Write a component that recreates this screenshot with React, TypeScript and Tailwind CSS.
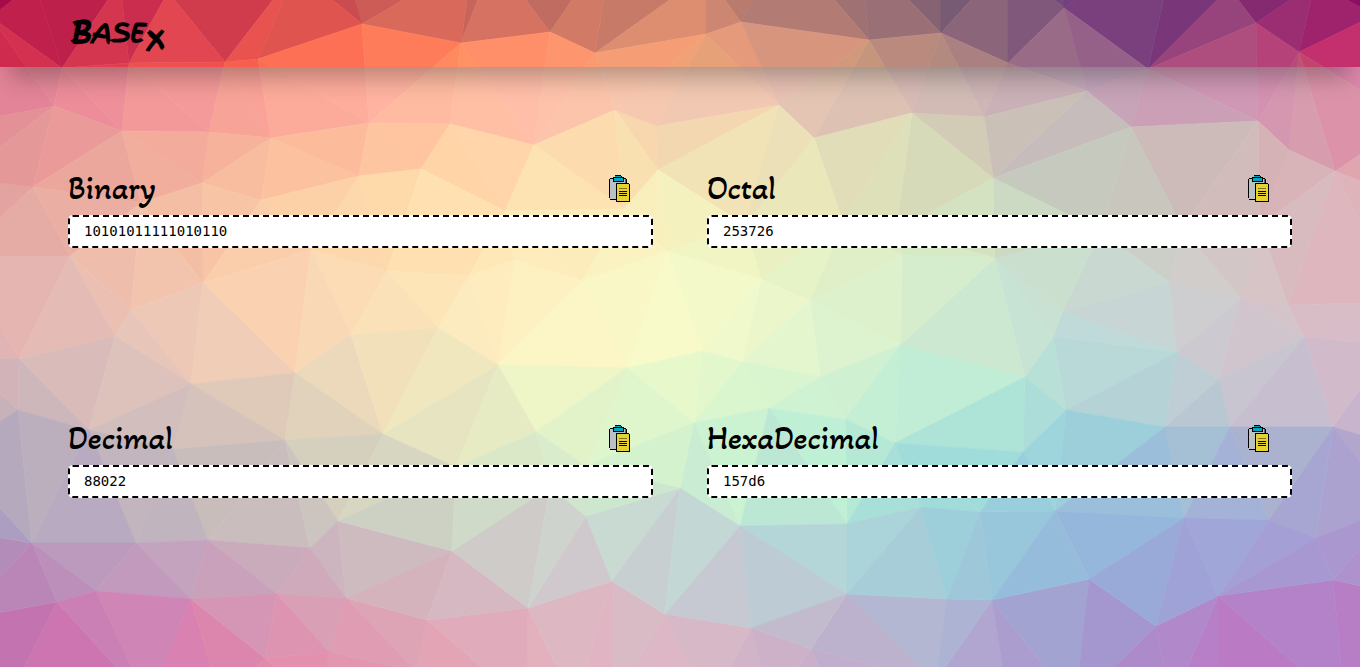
import { useId, useState } from "react";

type Point = [number, number];
type Rgb = [number, number, number];

const VERTICES: Point[] = [
  [-80, -90], [1440, -90], [-90, 740], [1450, 740],
  [35, -17], [120, -18], [168, -8], [296, -30], [346, -30], [473, -41], [494, -42], [614, -61], [706, -26], [787, -56],
  [860, -50], [941, -53], [1008, -41], [1064, -40], [1180, -75], [1229, -12], [1315, -17], [1375, 15],
  [-9, 17], [-57, 127], [-40, 178], [-40, 256], [-40, 358], [-50, 453], [-35, 532], [-40, 620],
  [1409, 120], [1433, 210], [1400, 302], [1390, 346], [1400, 447], [1395, 507], [1400, 595],
  [5, 705], [148, 702], [222, 705], [320, 710], [416, 671], [526, 705], [575, 705], [612, 705], [710, 705], [770, 705],
  [835, 705], [935, 682], [1010, 715], [1075, 705], [1172, 705], [1218, 720], [1345, 708],
  [62, 68], [54, 106], [129, 63], [122, 131], [225, 62], [258, 59], [362, 24], [209, 132], [271, 138], [33, 187],
  [202, 183], [261, 200], [141, 203], [70, 256], [461, 43], [550, 32], [595, 53], [369, 123], [450, 124], [534, 145],
  [615, 110], [657, 126], [421, 169], [359, 176], [505, 211], [658, 170], [624, 209], [706, 34], [741, 22],
  [869, 40], [941, 33], [1008, 63], [1064, 8], [1148, 69], [1256, 23], [1299, 52], [1335, 171], [1289, 150],
  [1258, 121], [1087, 91], [1131, 127], [984, 117], [993, 178], [912, 113], [779, 105], [814, 138],
  [1170, 282], [1062, 312], [1053, 337], [1177, 352], [1241, 298], [1288, 305], [1304, 337], [1219, 379],
  [1025, 377], [1066, 410], [1165, 427], [1230, 427], [1333, 427], [995, 258], [902, 255], [761, 279], [810, 301],
  [900, 345], [1101, 231], [1182, 228], [1260, 225], [745, 225], [843, 222], [896, 231], [667, 251], [582, 281],
  [514, 260], [469, 276], [387, 271], [311, 250], [203, 283], [131, 310], [115, 336], [19, 359], [191, 384],
  [295, 373], [351, 335], [438, 328], [498, 365], [627, 368], [703, 351], [742, 362], [820, 377], [769, 408],
  [694, 423], [845, 419], [895, 443], [383, 434], [285, 440], [18, 410], [89, 430], [536, 432], [173, 449],
  [32, 543], [136, 543], [208, 540], [310, 548], [338, 521], [57, 602], [96, 591], [191, 599], [277, 594],
  [346, 598], [265, 658], [427, 620], [452, 551], [528, 608], [612, 581], [586, 516], [665, 614], [740, 526],
  [680, 488], [329, 652], [847, 524], [847, 594], [751, 628], [811, 649], [921, 507], [980, 512], [1055, 511],
  [1184, 518], [1269, 520], [1316, 538], [947, 599], [992, 600], [1089, 579], [1156, 626], [1218, 596],
  [1333, 580], [456, 467], [550, 487], [586, 466], [1023, 452],
];

const VEIL = 0.42;
const COLUMN_STEP = 136;

/* Rows marked as veiled hold the colour as seen through the white veil of the content area. */
const PALETTE: { y: number; veiled: boolean; colors: string }[] = [
  { y: 15, veiled: false, colors: "B5164A CB2E4E DC4A4C E06A5A D87A65 D98C70 B88078 8C6B78 7E4E82 8F3C7A A01A68" },
  { y: 50, veiled: false, colors: "CE2A4E E04352 FF6652 FF7A5C FF946E F29F78 D39280 AE8380 93628A AE4E7F C42C70" },
  { y: 100, veiled: true, colors: "E38498 F2939A FBA497 FFBBA1 FFC0A9 F4CBB0 E4C5B2 D2BCB5 C4A8B8 CF98B5 DC8BA8" },
  { y: 150, veiled: true, colors: "E39597 F0A89B FAB79A FFC6A0 FFD9AB F6DDB0 E7E0B8 D3D2B6 C4C4BD CFB6B8 E0A0AC" },
  { y: 200, veiled: true, colors: "E2A29E EFB09E FBCBA4 FFDBAA FFE5B4 F6F0BC E8E6BA D4DFBB C5CCC0 D1BEBC DDB2B8" },
  { y: 270, veiled: true, colors: "E5B2AF F2C3AE FCD3B0 FFE2B4 FFF0C0 F6F9C6 E4F3C8 D5EDCC C8DBD0 D2CACA E0B4BC" },
  { y: 330, veiled: true, colors: "DFB4B4 E9C5B9 F9D2B5 F8E4BA FFF4C4 F8FBCA E4F6CE CFEACF BFDCDA D0C8CE D8BCC8" },
  { y: 390, veiled: true, colors: "CDB3B9 DCC2BC E3CCB8 EFE2BC EEF4C6 E4F8CA D2F3D2 BFECD6 B0DAD8 C4C8D2 D0B8CC" },
  { y: 450, veiled: true, colors: "B9AEBC C6B8BC D0C5BA E0DFC0 DDEFCA D4F6CE C0F0D4 A6E4D8 9CD0DC A8BCD0 B4A8CC" },
  { y: 510, veiled: true, colors: "AC9EC0 BDB0C0 CABEBE CDD2C4 CCDCCE C4E4D4 B4E0D8 98D4DC 94BEDE A0AEDA A89CD0" },
  { y: 570, veiled: true, colors: "B48AB9 C09CBE CBA8BC CFBAC0 D2C6CA C6CED2 B4D0D8 A0CAD8 92B4DC A0A0D6 AE90CC" },
  { y: 640, veiled: true, colors: "C274B0 D080B4 DE90AE DFA2B4 E0B4C0 D8BCC8 C4B4CC B0B0D2 A298D0 B682C8 B87AC4" },
];

const FIELD = PALETTE.map(({ y, veiled, colors }) => ({
  y,
  row: colors.split(" ").map((hex) =>
    [0, 2, 4].map((i) => {
      const v = parseInt(hex.slice(i, i + 2), 16);
      return veiled ? Math.max(0, (v - 255 * VEIL) / (1 - VEIL)) : v;
    }) as Rgb,
  ),
}));

const mix = (a: Rgb, b: Rgb, t: number): Rgb => [
  a[0] + (b[0] - a[0]) * t,
  a[1] + (b[1] - a[1]) * t,
  a[2] + (b[2] - a[2]) * t,
];

function colorAt(x: number, y: number): string {
  const gx = Math.min(9.999, Math.max(0, x / COLUMN_STEP));
  const col = Math.floor(gx);
  let r = 0;
  while (r < FIELD.length - 2 && FIELD[r + 1].y < y) r++;
  const top = FIELD[r];
  const bottom = FIELD[r + 1];
  const t = Math.min(1.2, Math.max(-0.6, (y - top.y) / (bottom.y - top.y)));
  const c = mix(
    mix(top.row[col], top.row[col + 1], gx - col),
    mix(bottom.row[col], bottom.row[col + 1], gx - col),
    t,
  );
  return `rgb(${c.map((v) => Math.round(Math.min(255, Math.max(0, v)))).join(",")})`;
}

type Tri = { p: [number, number, number]; cx: number; cy: number; r2: number };

function triangulate(input: Point[]): { points: string; fill: string }[] {
  const n = input.length;
  const pts: Point[] = [...input, [-20000, -20000], [20000, -20000], [0, 30000]];
  const make = (a: number, b: number, c: number): Tri => {
    const [ax, ay] = pts[a];
    const [bx, by] = pts[b];
    const [cx, cy] = pts[c];
    const d = 2 * (ax * (by - cy) + bx * (cy - ay) + cx * (ay - by));
    const a2 = ax * ax + ay * ay;
    const b2 = bx * bx + by * by;
    const c2 = cx * cx + cy * cy;
    const ux = (a2 * (by - cy) + b2 * (cy - ay) + c2 * (ay - by)) / d;
    const uy = (a2 * (cx - bx) + b2 * (ax - cx) + c2 * (bx - ax)) / d;
    return { p: [a, b, c], cx: ux, cy: uy, r2: (ax - ux) ** 2 + (ay - uy) ** 2 };
  };
  let tris: Tri[] = [make(n, n + 1, n + 2)];
  for (let i = 0; i < n; i++) {
    const [x, y] = pts[i];
    const edges = new Map<string, Point>();
    const keep: Tri[] = [];
    for (const t of tris) {
      if ((x - t.cx) ** 2 + (y - t.cy) ** 2 >= t.r2) {
        keep.push(t);
        continue;
      }
      const [a, b, c] = t.p;
      for (const [u, v] of [[a, b], [b, c], [c, a]]) {
        const key = u < v ? `${u}-${v}` : `${v}-${u}`;
        if (edges.has(key)) edges.delete(key);
        else edges.set(key, [u, v]);
      }
    }
    tris = keep;
    edges.forEach(([u, v]) => tris.push(make(u, v, i)));
  }
  return tris
    .filter((t) => t.p.every((i) => i < n))
    .map((t) => {
      const corners = t.p.map((i) => pts[i]);
      const x = (corners[0][0] + corners[1][0] + corners[2][0]) / 3;
      const y = (corners[0][1] + corners[1][1] + corners[2][1]) / 3;
      return { points: corners.map((c) => c.join(",")).join(" "), fill: colorAt(x, y) };
    });
}

const FACETS = triangulate(VERTICES);

function Backdrop() {
  return (
    <svg
      aria-hidden="true"
      className="absolute inset-0 -z-10 h-full w-full"
      viewBox="0 0 1360 667"
      preserveAspectRatio="xMidYMid slice"
    >
      {FACETS.map((f) => (
        <polygon key={f.points} points={f.points} fill={f.fill} stroke={f.fill} strokeWidth="0.6" />
      ))}
    </svg>
  );
}

function ClipboardIcon() {
  return (
    <svg aria-hidden="true" className="h-7 w-[22px]" viewBox="0 0 22 28" shapeRendering="crispEdges">
      <path d="M1 3h16v1h1v20H1v-1H0V4h1z" fill="#000" />
      <path d="M1 4h15v20H1z" fill="#b9c1c4" />
      <path d="M1 24h7v1H1z" fill="#000" />
      <path d="M16 4h1v5h-1z" fill="#56686c" />
      <path d="M6 0h6v1h1v1h2v5H4V2h2z" fill="#000" />
      <path d="M6 1h6v1H6zM5 3h9v3H5z" fill="#00a5c0" />
      <path d="M7 8h13v1h1v18H7z" fill="#000" />
      <path d="M8 9h12v17H8z" fill="#e6d230" />
      <path d="M10 13h8v1h-8z" fill="#81761f" />
      <path d="M10 16h8v1h-8zM10 18h8v1h-8zM10 20h8v1h-8z" fill="#000" />
    </svg>
  );
}

type Base = { name: string; radix: number };

const BASES: Base[] = [
  { name: "Binary", radix: 2 },
  { name: "Octal", radix: 8 },
  { name: "Decimal", radix: 10 },
  { name: "HexaDecimal", radix: 16 },
];

function BaseField({ base, value, onChange }: { base: Base; value: string; onChange: (text: string) => void }) {
  const id = useId();
  return (
    <div>
      <div className="mb-1 flex h-11 items-center justify-between pr-[22px]">
        <label
          htmlFor={id}
          className="font-['Akaya_Telivigala','Lato',sans-serif] text-[33px] leading-10 font-normal text-black"
        >
          {base.name}
        </label>
        <button
          type="button"
          aria-label={`Copy ${base.name}`}
          className="cursor-pointer"
          onClick={() => navigator.clipboard?.writeText(value)}
        >
          <ClipboardIcon />
        </button>
      </div>
      <input
        id={id}
        type="text"
        value={value}
        onChange={(e) => onChange(e.target.value)}
        className="h-[33px] w-full rounded-[5px] border-2 border-dashed border-black bg-white px-3.5 pb-0.5 font-['DejaVu_Sans_Mono',monospace] text-sm text-black outline-none"
      />
    </div>
  );
}

export default function App() {
  const [amount, setAmount] = useState<number | null>(88022);

  const update = (text: string, radix: number) => {
    const parsed = parseInt(text, radix);
    setAmount(Number.isNaN(parsed) ? null : parsed);
  };

  return (
    <div className="relative isolate flex min-h-screen flex-col overflow-hidden">
      <Backdrop />
      <header className="relative z-10 flex h-[67px] items-center px-[5%] shadow-[0_20px_25px_-10px_rgba(0,0,0,0.28)]">
        <a
          href="#"
          className="pb-1 font-['Finger_Paint','Lato',sans-serif] text-[26px] leading-8 font-bold text-black uppercase italic"
        >
          <span className="text-[32px]">B</span>ase<sub className="text-[28px]">x</sub>
        </a>
      </header>
      <main className="grid flex-1 auto-rows-[250px] grid-cols-2 content-start gap-x-[54px] bg-white/42 px-[5%] pt-[100px]">
        {BASES.map((base) => (
          <BaseField
            key={base.radix}
            base={base}
            value={amount === null ? "" : amount.toString(base.radix)}
            onChange={(text) => update(text, base.radix)}
          />
        ))}
      </main>
    </div>
  );
}
